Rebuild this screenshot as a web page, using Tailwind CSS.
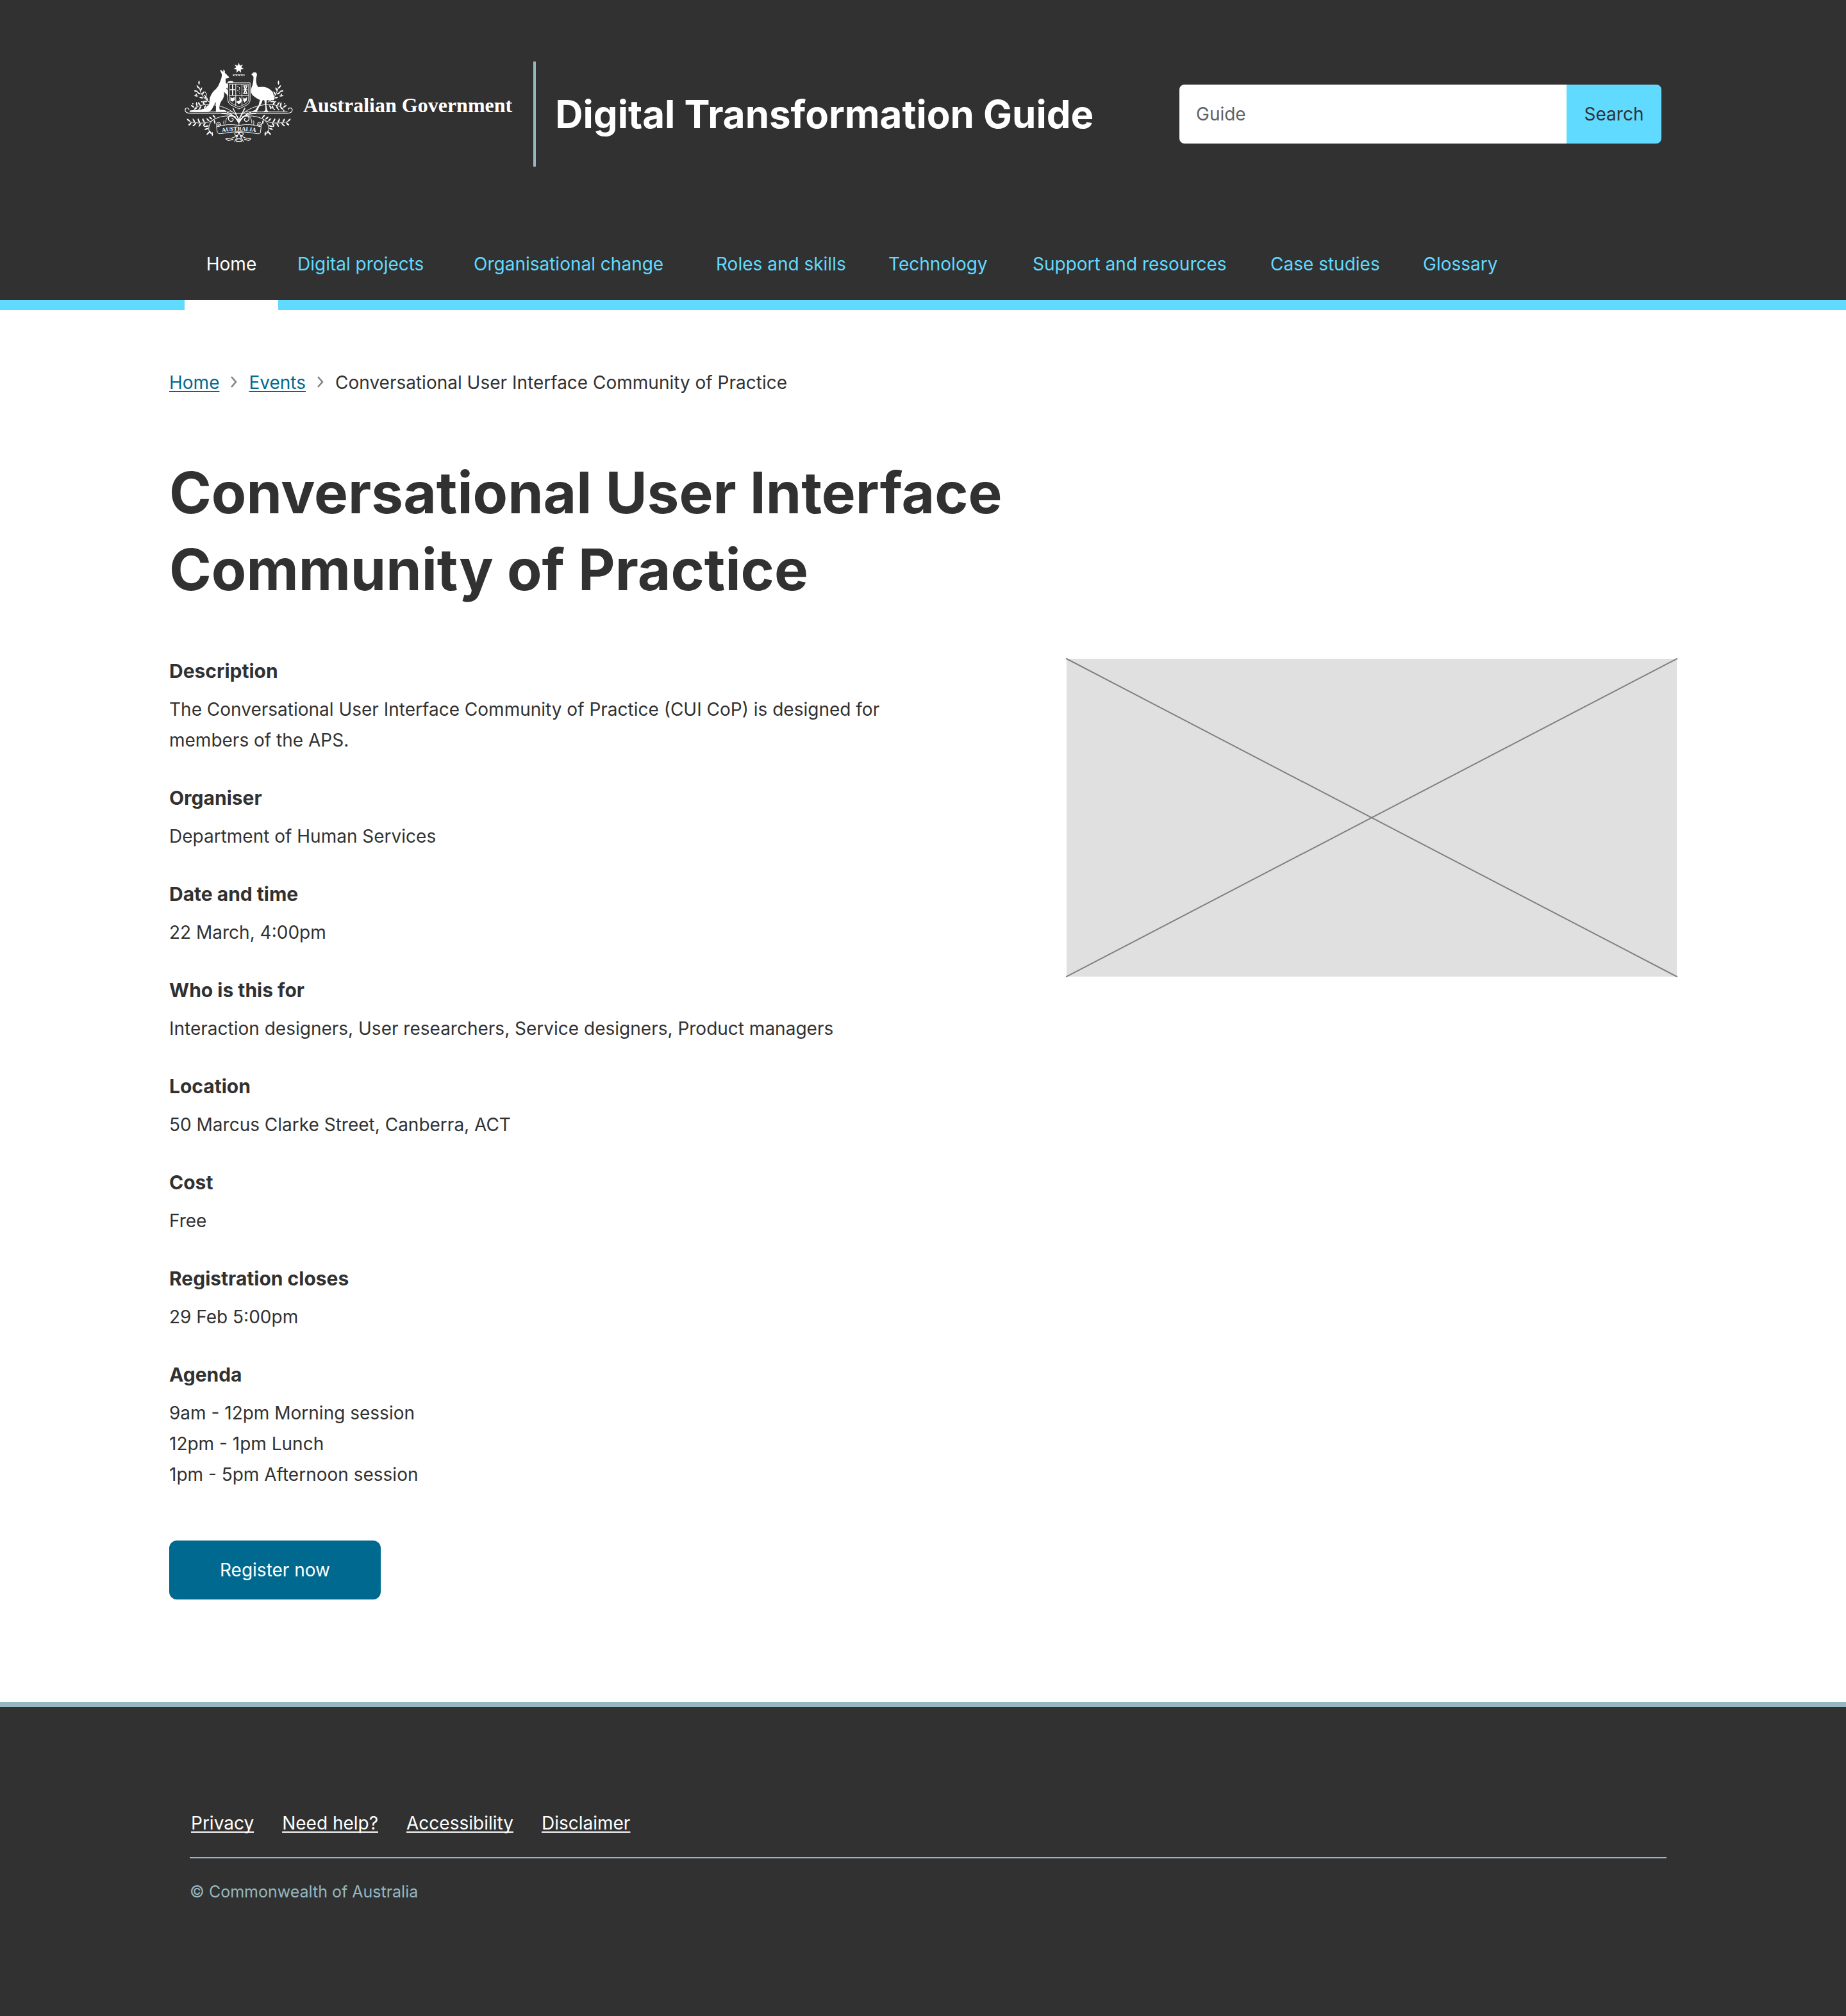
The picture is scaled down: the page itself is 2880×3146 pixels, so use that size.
<!DOCTYPE html>
<html lang="en">
<head>
<meta charset="utf-8">
<meta name="viewport" content="width=device-width, initial-scale=1">
<title>Conversational User Interface Community of Practice - Digital Transformation Guide</title>
<script src="https://cdn.jsdelivr.net/npm/@tailwindcss/browser@4"></script>
</head>
<body class="bg-white font-['Inter',sans-serif] text-[28px] leading-[48px] text-[#313131]">

<header class="border-b-16 border-[#61daff] bg-[#313131]">
  <div class="mx-auto max-w-[2304px]">
    <div class="flex items-center pt-24">
      <a href="#" class="flex items-start self-start pr-[33px] text-white">
        <!-- Commonwealth coat of arms -->
        <svg class="h-32 w-[169px] shrink-0" viewBox="24 18 506 384" fill="none" stroke="#fff" stroke-linecap="round" stroke-linejoin="round" aria-hidden="true">
          <defs>
            <path id="leaf" d="M0 0Q-7 -10 0 -22Q7 -10 0 0Z" fill="#fff" stroke="none"/>
            <g id="foliage">
              <g stroke-width="3">
                <path d="M277 288C262 250 200 222 140 219C115 218 95 224 75 232"/>
                <path d="M277 296C255 268 225 262 198 262M270 275C262 258 256 250 250 236"/>
                <path d="M140 208C118 196 102 178 92 140"/>
                <path d="M262 276C215 268 180 275 150 296C115 312 80 306 48 300"/>
                <path d="M168 284C142 300 130 320 140 352"/>
                <path d="M240 270C222 274 214 292 216 306M208 296C204 302 206 312 212 318"/>
              </g>
              <path stroke-width="4" d="M277 305C268 288 258 272 240 272C226 273 225 294 239 298C250 300 256 286 245 283"/>
              <g>
                <use href="#leaf" transform="translate(91 128)"/>
                <use href="#leaf" transform="translate(92 146) rotate(-35)"/>
                <use href="#leaf" transform="translate(96 158) rotate(25)"/>
                <use href="#leaf" transform="translate(88 160) rotate(-70)"/>
                <use href="#leaf" transform="translate(100 172) rotate(-60)"/>
                <use href="#leaf" transform="translate(104 176) rotate(30)"/>
                <use href="#leaf" transform="translate(88 180) rotate(-80)"/>
                <use href="#leaf" transform="translate(112 190) rotate(-75)"/>
                <use href="#leaf" transform="translate(118 194) rotate(20)"/>
                <use href="#leaf" transform="translate(132 204) rotate(-20)"/>
                <use href="#leaf" transform="translate(130 206) rotate(-85)"/>
                <use href="#leaf" transform="translate(70 234) rotate(-55)"/>
                <use href="#leaf" transform="translate(82 229) rotate(-10)"/>
                <use href="#leaf" transform="translate(84 232) rotate(-125)"/>
                <use href="#leaf" transform="translate(98 225) rotate(-35)"/>
                <use href="#leaf" transform="translate(102 225) rotate(-150)"/>
                <use href="#leaf" transform="translate(118 222) rotate(-30)"/>
                <use href="#leaf" transform="translate(122 222) rotate(-160)"/>
                <use href="#leaf" transform="translate(136 222) rotate(-140)"/>
                <use href="#leaf" transform="translate(50 300) rotate(-50)"/>
                <use href="#leaf" transform="translate(56 302) rotate(-140)"/>
                <use href="#leaf" transform="translate(72 303) rotate(-30)"/>
                <use href="#leaf" transform="translate(78 304) rotate(-140)"/>
                <use href="#leaf" transform="translate(96 306) rotate(-30)"/>
                <use href="#leaf" transform="translate(100 306) rotate(-150)"/>
                <use href="#leaf" transform="translate(118 304) rotate(-35)"/>
                <use href="#leaf" transform="translate(122 304) rotate(-145)"/>
                <use href="#leaf" transform="translate(140 298) rotate(-45)"/>
                <use href="#leaf" transform="translate(154 290) rotate(-50)"/>
                <use href="#leaf" transform="translate(168 283) rotate(-40)"/>
                <use href="#leaf" transform="translate(162 290) rotate(170)"/>
                <use href="#leaf" transform="translate(138 318) rotate(-105)"/>
                <use href="#leaf" transform="translate(136 330) rotate(-110)"/>
                <use href="#leaf" transform="translate(138 340) rotate(150)"/>
                <use href="#leaf" transform="translate(140 346) rotate(-140)"/>
                <use href="#leaf" transform="translate(152 346) rotate(175)"/>
              </g>
              <g fill="#fff" stroke="none">
                <circle cx="72" cy="156" r="3"/><circle cx="78" cy="172" r="3"/><circle cx="120" cy="162" r="3"/><circle cx="126" cy="170" r="3"/><circle cx="116" cy="178" r="3"/><circle cx="104" cy="206" r="3"/>
                <circle cx="62" cy="216" r="3"/><circle cx="90" cy="244" r="3"/><circle cx="110" cy="242" r="3"/><circle cx="128" cy="238" r="3"/><circle cx="66" cy="248" r="3"/>
                <circle cx="44" cy="312" r="3"/><circle cx="88" cy="288" r="3"/><circle cx="110" cy="288" r="3"/><circle cx="116" cy="322" r="3"/><circle cx="124" cy="334" r="3"/><circle cx="64" cy="318" r="3"/>
              </g>
            </g>
          </defs>
          <use href="#foliage"/>
          <use href="#foliage" transform="translate(554 0) scale(-1 1)"/>

          <!-- scrolled ground line -->
          <path stroke-width="3.5" d="M44 243C42 234 28 232 26 244C25 256 36 260 50 260H504C518 260 529 255 527 243C525 232 511 233 509 242"/>
          <path stroke-width="3" d="M50 254H250M306 254H504"/>

          <!-- Commonwealth star and wreath -->
          <path fill="#fff" stroke="none" d="M277 23L282.2 37.2L296.5 32.4L288.7 45.3L301.4 53.6L286.4 55.5L287.8 70.5L277 60L266.2 70.5L267.6 55.5L252.6 53.6L265.3 45.3L257.5 32.4L271.8 37.2Z"/>
          <path stroke-width="6" d="M252 82H302"/>
          <path stroke="#313131" stroke-width="3" stroke-dasharray="5 8" d="M257 82H300"/>

          <!-- kangaroo -->
          <path fill="#fff" stroke="none" d="M190 56Q199 60 204 67L206 54Q213 60 212 72Q220 76 224 84Q233 89 232 94Q226 98 216 97Q214 108 217 120L229 124Q234 134 226 140L218 142Q222 152 228 160L231 180Q224 182 220 172Q212 164 208 160Q211 182 200 198Q189 208 186 232L188 244Q206 244 218 248V252H170Q172 228 168 206Q162 222 154 236Q148 250 134 252Q90 256 46 251Q44 246 60 246Q104 246 126 234Q142 222 140 200Q142 176 160 156Q180 140 188 116Q196 100 198 84Q198 74 194 68Q190 62 190 56Z"/>
          <path fill="#fff" stroke="none" d="M224 114Q236 104 252 112L250 118H228Z"/>

          <!-- emu -->
          <path fill="#fff" stroke="none" d="M336 80Q342 68 352 68Q363 69 362 82Q357 96 358 110Q359 126 368 138Q398 132 420 146Q442 160 444 194Q442 200 430 198Q420 202 408 198L406 222L410 246L416 252H392L402 246L401 222L396 198L388 200Q386 214 374 228L362 252H336L354 245L370 222L376 198Q356 188 342 176Q330 164 336 142Q346 120 346 92Q346 84 336 80Z"/>

          <!-- shield -->
          <path fill="#313131" stroke-width="3" d="M226 117H330V196Q330 214 314 222L278 240L242 222Q226 214 226 196Z"/>
          <path stroke-width="2.5" d="M233 124H323V194Q323 208 310 215L278 231L246 215Q233 208 233 194Z"/>
          <path stroke-width="3" d="M263 124V224M292 124V224M233 178H323"/>
          <path stroke-width="5" d="M248 128V174M237 150H259"/>
          <path stroke-width="4" stroke-dasharray="1 9" d="M272 134L284 144L272 154L284 164L276 172"/>
          <path stroke-width="5" d="M300 132H316M300 150H316M300 168H316M301 132L315 168M315 132L301 168"/>
          <path fill="#fff" stroke="none" d="M238 184L246 190L258 184V198L248 206L238 200ZM266 202Q274 208 282 198L278 186Q288 186 290 200Q288 216 276 216Q266 212 266 202ZM298 186L306 192L316 184L314 200L304 210L298 200Z"/>

          <!-- stems meeting below the shield -->
          <path stroke-width="3.5" d="M278 318V290M278 300C274 280 262 262 250 238M278 300C282 280 294 262 306 238M274 300C262 276 240 262 224 256M282 300C294 276 316 262 332 256"/>

          <!-- motto scroll -->
          <path fill="#313131" stroke-width="3" d="M174 322Q228 308 278 317Q328 308 382 322L378 352Q374 358 364 356Q320 348 278 346Q236 348 192 356Q180 358 177 350Z"/>
          <circle cx="182" cy="313" r="10" stroke-width="3"/><circle cx="182" cy="313" r="4" stroke-width="2.5"/>
          <circle cx="374" cy="313" r="10" stroke-width="3"/><circle cx="374" cy="313" r="4" stroke-width="2.5"/>
          <path id="motto" stroke="none" d="M184 352Q278 330 372 352"/>
          <text fill="#fff" stroke="none" font-family="Liberation Serif, serif" font-weight="700" font-size="27"><textPath href="#motto" startOffset="50%" text-anchor="middle">AUSTRALIA</textPath></text>

          <!-- ribbon knot -->
          <path stroke-width="3.5" d="M278 350C262 346 252 356 262 364C270 368 276 360 278 350C294 346 304 356 294 364C286 368 280 360 278 350M272 366L240 378L216 380L228 388L250 382M284 366L314 378L334 380L324 388L304 382M270 370L258 392M286 370L298 392M266 392L270 380H286L290 392Z"/>
        </svg>
        <span class="mt-12 ml-4 font-['Liberation_Serif',serif] text-[32px] leading-10 font-bold whitespace-nowrap">Australian Government</span>
      </a>
      <div class="flex h-41 items-center border-l-4 border-[#95b7bf] pl-[30px]">
        <span class="text-[60px] leading-[72px] font-bold whitespace-nowrap text-white">Digital Transformation Guide</span>
      </div>
      <form class="ml-auto flex h-23 w-[752px]" role="search" onsubmit="return false">
        <input type="search" placeholder="Guide" aria-label="Search the guide" class="min-w-0 flex-1 rounded-l-lg bg-white px-[26px] text-[#313131] placeholder:text-[#626262]">
        <button type="submit" class="w-37 rounded-r-lg bg-[#61daff] text-center">Search</button>
      </form>
    </div>

    <nav class="mt-32 -mb-4" aria-label="Main">
      <ul class="grid grid-cols-[146px_275px_378px_269px_225px_371px_238px_auto] whitespace-nowrap text-[#61daff]">
        <li><a href="#" aria-current="page" class="block border-b-16 border-white pb-8 text-center text-white">Home</a></li>
        <li><a href="#" class="block px-[30px]">Digital projects</a></li>
        <li><a href="#" class="block px-[30px]">Organisational change</a></li>
        <li><a href="#" class="block px-[30px]">Roles and skills</a></li>
        <li><a href="#" class="block px-[30px]">Technology</a></li>
        <li><a href="#" class="block px-[30px]">Support and resources</a></li>
        <li><a href="#" class="block px-[30px]">Case studies</a></li>
        <li><a href="#" class="block px-[30px]">Glossary</a></li>
      </ul>
    </nav>
  </div>
</header>

<main class="mx-auto max-w-[2352px] pt-[89px] pb-40">
  <nav aria-label="Breadcrumb">
    <ol class="flex items-center gap-[17px]">
      <li><a href="#" class="text-[#00698f] underline decoration-2 underline-offset-[3px]">Home</a></li>
      <li aria-hidden="true"><svg class="h-5 w-3" viewBox="0 0 12 20" fill="none" stroke="#808080" stroke-width="2.5"><path d="M2 1L9 9L2 17"/></svg></li>
      <li><a href="#" class="text-[#00698f] underline decoration-2 underline-offset-[3px]">Events</a></li>
      <li aria-hidden="true"><svg class="h-5 w-3" viewBox="0 0 12 20" fill="none" stroke="#808080" stroke-width="2.5"><path d="M2 1L9 9L2 17"/></svg></li>
      <li aria-current="page">Conversational User Interface Community of Practice</li>
    </ol>
  </nav>

  <h1 class="mt-[88px] max-w-[1400px] text-[89px] leading-[120px] font-bold">Conversational User Interface Community of Practice</h1>

  <div class="mt-[74px] grid grid-cols-[1fr_952px] items-start gap-[248px]">
    <div>
      <dl class="flex flex-col gap-[42px]">
        <div><dt class="mb-3 text-[30px] font-bold">Description</dt><dd>The Conversational User Interface Community of Practice (CUI CoP) is designed for members of the APS.</dd></div>
        <div><dt class="mb-3 text-[30px] font-bold">Organiser</dt><dd>Department of Human Services</dd></div>
        <div><dt class="mb-3 text-[30px] font-bold">Date and time</dt><dd>22 March, 4:00pm</dd></div>
        <div><dt class="mb-3 text-[30px] font-bold">Who is this for</dt><dd>Interaction designers, User researchers, Service designers, Product managers</dd></div>
        <div><dt class="mb-3 text-[30px] font-bold">Location</dt><dd>50 Marcus Clarke Street, Canberra, ACT</dd></div>
        <div><dt class="mb-3 text-[30px] font-bold">Cost</dt><dd>Free</dd></div>
        <div><dt class="mb-3 text-[30px] font-bold">Registration closes</dt><dd>29 Feb 5:00pm</dd></div>
        <div><dt class="mb-3 text-[30px] font-bold">Agenda</dt><dd>9am - 12pm Morning session<br>12pm - 1pm Lunch<br>1pm - 5pm Afternoon session</dd></div>
      </dl>
      <button type="button" class="mt-[79px] block h-23 w-[330px] rounded-xl bg-[#00698f] text-white">Register now</button>
    </div>
    <svg class="mt-[5px] h-[496px] w-full overflow-visible bg-[#e0e0e0]" viewBox="0 0 952 496" preserveAspectRatio="none" stroke="#808080" stroke-width="2" stroke-linecap="square" role="img" aria-label="Event image"><path d="M0 0L952 496M952 0L0 496"/></svg>
  </div>
</main>

<footer class="border-t-8 border-[#95b7bf] bg-[#313131] pt-[157px] pb-[174px]">
  <div class="mx-auto max-w-[2320px] pl-4">
    <ul class="flex gap-11 border-b-2 border-[#95b7bf] pb-[29px] pl-0.5 text-white">
      <li><a href="#" class="underline decoration-2 underline-offset-[3px] [text-decoration-skip-ink:none]">Privacy</a></li>
      <li><a href="#" class="underline decoration-2 underline-offset-[3px] [text-decoration-skip-ink:none]">Need help?</a></li>
      <li><a href="#" class="underline decoration-2 underline-offset-[3px] [text-decoration-skip-ink:none]">Accessibility</a></li>
      <li><a href="#" class="underline decoration-2 underline-offset-[3px] [text-decoration-skip-ink:none]">Disclaimer</a></li>
    </ul>
    <p class="pt-8 text-[25px] leading-10 text-[#95b7bf]">© Commonwealth of Australia</p>
  </div>
</footer>
</body>
</html>
